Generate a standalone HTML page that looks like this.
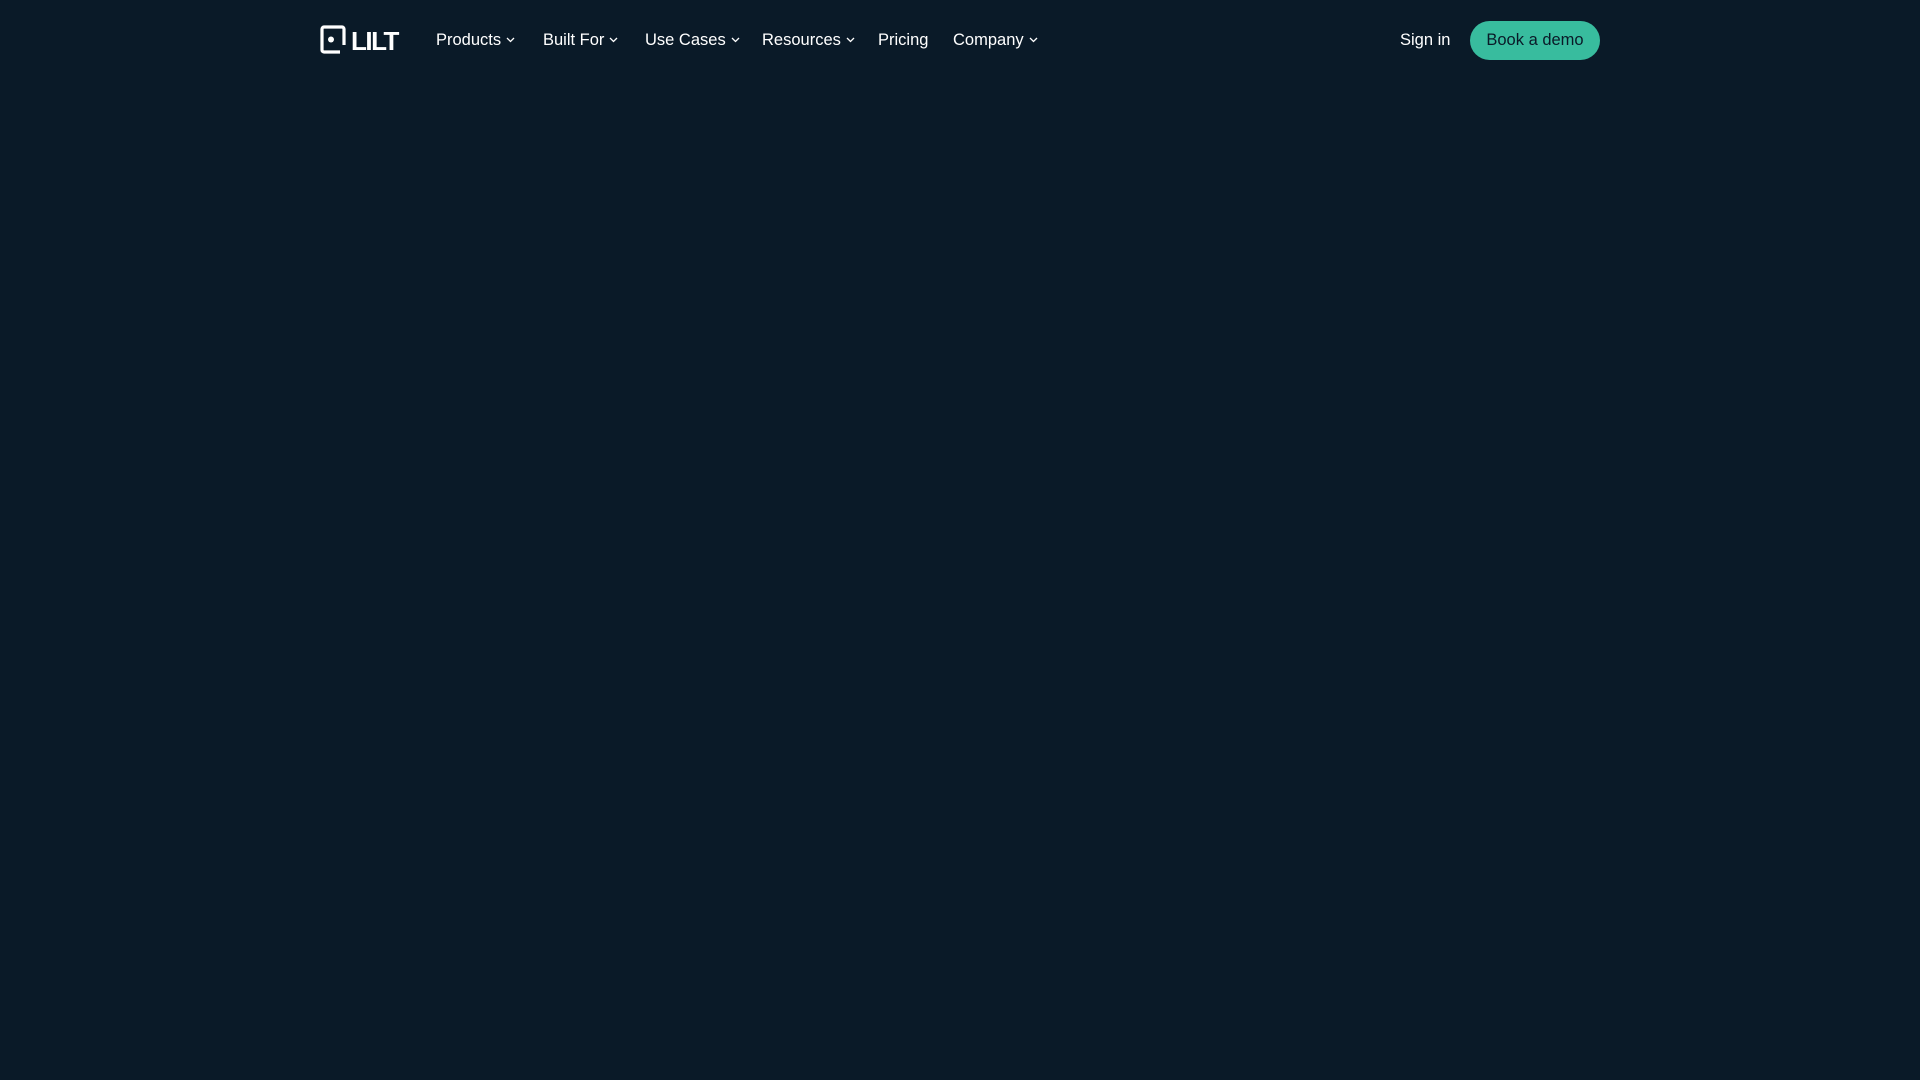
<!DOCTYPE html>
<html><head><meta charset="utf-8"><style>
html,body{margin:0;width:1920px;height:1080px;background:#0a1a28;overflow:hidden;font-family:"Liberation Sans",sans-serif;color:#fff}
.nav{position:absolute;top:0;left:0;width:1920px;height:80px}
.item{position:absolute;top:30px;font-size:16.5px;line-height:20px;white-space:nowrap}
.item svg{margin-left:5px;vertical-align:2px}
.logo{position:absolute;left:320px;top:25px}
.lilt{position:absolute;left:351px;top:27px;font-size:26px;font-weight:bold;letter-spacing:-1.5px;line-height:28px}
.btn{position:absolute;left:1470px;top:21px;width:130px;height:39px;border-radius:20px;background:#38bc9e;color:#0a1a28;font-size:16.5px;line-height:39px;text-align:center}
</style></head><body>
<div class="nav">
<svg class="logo" width="26" height="29" viewBox="0 0 26 29"><path d="M24 20V4a2 2 0 0 0-2-2H4a2 2 0 0 0-2 2v21a2 2 0 0 0 2 2h16" fill="none" stroke="#fff" stroke-width="3.2"/><circle cx="11" cy="14.5" r="3" fill="#fff"/></svg>
<div class="lilt">LILT</div>
<div class="item" style="left:436px">Products<svg width="9" height="6" viewBox="0 0 9 6"><path d="M1 1l3.5 3.5L8 1" fill="none" stroke="#fff" stroke-width="1.3"/></svg></div>
<div class="item" style="left:543px">Built For<svg width="9" height="6" viewBox="0 0 9 6"><path d="M1 1l3.5 3.5L8 1" fill="none" stroke="#fff" stroke-width="1.3"/></svg></div>
<div class="item" style="left:645px">Use Cases<svg width="9" height="6" viewBox="0 0 9 6"><path d="M1 1l3.5 3.5L8 1" fill="none" stroke="#fff" stroke-width="1.3"/></svg></div>
<div class="item" style="left:762px">Resources<svg width="9" height="6" viewBox="0 0 9 6"><path d="M1 1l3.5 3.5L8 1" fill="none" stroke="#fff" stroke-width="1.3"/></svg></div>
<div class="item" style="left:878px">Pricing</div>
<div class="item" style="left:953px">Company<svg width="9" height="6" viewBox="0 0 9 6"><path d="M1 1l3.5 3.5L8 1" fill="none" stroke="#fff" stroke-width="1.3"/></svg></div>
<div class="item" style="left:1400px">Sign in</div>
<div class="btn">Book a demo</div>
</div>
</body></html>
